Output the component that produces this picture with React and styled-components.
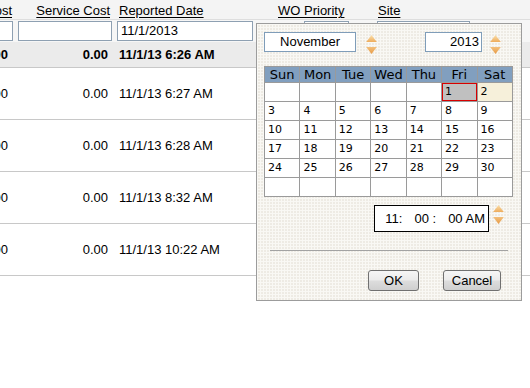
import React from "react";
import styled, { createGlobalStyle } from "styled-components";

const GlobalStyle = createGlobalStyle`
  html, body {
    margin: 0;
    padding: 0;
    background: #fff;
  }
  body {
    font-family: "Liberation Sans", Arial, sans-serif;
    overflow: hidden;
  }
`;

const Page = styled.div`
  position: relative;
  width: 530px;
  height: 388px;
  overflow: hidden;
  background: #fff;
  color: #000;
`;

const Grid = styled.div`
  display: flex;
  flex-direction: column;
  width: 530px;
`;

const HeaderRow = styled.div`
  display: flex;
  height: 20px;
  box-sizing: border-box;
  background: #f4f4f4;
  border-bottom: 1px solid #dedede;
`;

const FilterRow = styled.div`
  display: flex;
  height: 22px;
  box-sizing: border-box;
  background: #f6f6f6;
  padding-top: 1px;
`;

const DataRow = styled.div`
  display: flex;
  height: ${(p) => (p.$first ? 26 : 52)}px;
  box-sizing: border-box;
  background: ${(p) => (p.$first ? "#ebebeb" : "#fff")};
  border-bottom: 1px solid #c8c8c8;
  font-weight: ${(p) => (p.$first ? "bold" : "normal")};
`;

const Cell = styled.div`
  flex: 0 0 ${(p) => p.$w}px;
  display: flex;
  align-items: ${(p) => (p.$top ? "flex-start" : "center")};
  justify-content: ${(p) => (p.$right ? "flex-end" : "flex-start")};
  padding: 0 ${(p) => p.$pr || 0}px 0 ${(p) => p.$pl || 0}px;
  box-sizing: border-box;
  overflow: hidden;
  white-space: nowrap;
  font-size: 13px;
`;

const HeadLabel = styled.span`
  padding-top: 3px;
  line-height: 15px;
  text-decoration: underline;
  text-underline-offset: 2px;
`;

const FilterBox = styled.div`
  flex: 0 0 ${(p) => p.$w}px;
  height: 20px;
  box-sizing: border-box;
  margin-left: ${(p) => p.$ml || 0}px;
  margin-right: ${(p) => p.$mr || 0}px;
  border: 1px solid #8ea0b2;
  background: #fff;
  font-size: 13px;
  line-height: 18px;
  padding-left: 3px;
`;

/* popup */

const Popup = styled.div`
  position: absolute;
  left: 256px;
  top: 23px;
  width: 266px;
  box-sizing: border-box;
  border: 1px solid #9c9c9c;
  background-color: #eeebe4;
  background-image: linear-gradient(90deg, #f9f8f4 1px, transparent 1px),
    linear-gradient(#f9f8f4 1px, transparent 1px);
  background-size: 3px 3px;
  padding: 8px 7px 9px 7px;
`;

const TopBar = styled.div`
  display: flex;
  height: 20px;
  padding-right: 13px;
`;

const SpinGroup = styled.div`
  display: flex;
  align-items: flex-start;
  margin-left: ${(p) => (p.$auto ? "auto" : "0")};
`;

const ValueBox = styled.div`
  width: ${(p) => p.$w}px;
  height: 20px;
  box-sizing: border-box;
  border: 1px solid #7f9db9;
  background: #fff;
  font-size: 13px;
  line-height: 18px;
  text-align: ${(p) => p.$align || "center"};
  padding-right: ${(p) => (p.$align === "right" ? 2 : 0)}px;
`;

const Spin = styled.svg`
  display: block;
  flex: 0 0 auto;
  margin-left: ${(p) => p.$ml}px;
  margin-top: ${(p) => p.$mt}px;
`;

const CalTable = styled.table`
  width: 249px;
  margin-top: 14px;
  border-collapse: collapse;
  table-layout: fixed;
  background: #fff;
  font-family: "DejaVu Sans", Verdana, sans-serif;
`;

const DayHead = styled.th`
  height: 15px;
  padding: 0;
  background: #819fbf;
  border: 1px solid #9a9a9a;
  font-size: 13px;
  font-weight: normal;
  line-height: 15px;
  color: #000;
`;

const DayCell = styled.td`
  height: 18px;
  padding: 0 0 0 3px;
  border: 1px solid #9a9a9a;
  font-size: 11px;
  line-height: 18px;
  background: ${(p) => (p.$selected ? "#c0c0c0" : p.$weekendHi ? "#f6f0da" : "#fff")};
  box-shadow: ${(p) => (p.$selected ? "inset 0 0 0 1px #d80000" : "none")};
`;

const TimeRow = styled.div`
  display: flex;
  justify-content: flex-end;
  align-items: flex-start;
  margin-top: 8px;
  padding-right: 10px;
`;

const TimeBox = styled.div`
  width: 115px;
  height: 27px;
  box-sizing: border-box;
  border: 1px solid #000;
  background: #fff;
  display: flex;
  align-items: center;
  justify-content: flex-end;
  gap: 12px;
  padding-right: 3px;
  font-size: 13px;
`;

const Separator = styled.div`
  margin: 18px 6px 0;
  border-top: 1px solid #a3a3a3;
`;

const ButtonRow = styled.div`
  display: flex;
  justify-content: flex-end;
  gap: 24px;
  margin-top: 19px;
  padding-right: 13px;
`;

const Button = styled.button`
  width: ${(p) => p.$w}px;
  height: 21px;
  box-sizing: border-box;
  padding: 0;
  border: 1px solid #707070;
  border-radius: 3px;
  background: linear-gradient(#f6f6f6 0%, #ebebeb 48%, #dddddd 52%, #cfcfcf 100%);
  font-family: "Liberation Sans", Arial, sans-serif;
  font-size: 13px;
  color: #000;
`;

const columns = [
  { w: 15, label: "Cost", right: true, hpr: 3, vpr: 7 },
  { w: 99, label: "Service Cost", right: true, hpr: 4, vpr: 6 },
  { w: 141, label: "Reported Date", pl: 5 },
  { w: 113, label: "WO Priority", pl: 23 },
  { w: 120, label: "Site", pl: 10 },
];

const rows = [
  { cost: "0.00", service: "0.00", date: "11/1/13 6:26 AM" },
  { cost: "0.00", service: "0.00", date: "11/1/13 6:27 AM" },
  { cost: "0.00", service: "0.00", date: "11/1/13 6:28 AM" },
  { cost: "0.00", service: "0.00", date: "11/1/13 8:32 AM" },
  { cost: "0.00", service: "0.00", date: "11/1/13 10:22 AM" },
];

const weekDays = ["Sun", "Mon", "Tue", "Wed", "Thu", "Fri", "Sat"];

// November 2013 starts on a Friday
const buildWeeks = () => {
  const cells = [];
  for (let i = 0; i < 5; i++) cells.push(null);
  for (let d = 1; d <= 30; d++) cells.push(d);
  while (cells.length < 42) cells.push(null);
  const weeks = [];
  for (let i = 0; i < 42; i += 7) weeks.push(cells.slice(i, i + 7));
  return weeks;
};

const Spinner = ({ ml, mt }) => (
  <Spin $ml={ml} $mt={mt} width="11" height="21" viewBox="0 0 11 21">
    <defs>
      <linearGradient id="spinUp" x1="0" y1="0" x2="0" y2="1">
        <stop offset="0" stopColor="#fbe0ac" />
        <stop offset="1" stopColor="#eeac5c" />
      </linearGradient>
      <linearGradient id="spinDown" x1="0" y1="0" x2="0" y2="1">
        <stop offset="0" stopColor="#f3c07c" />
        <stop offset="1" stopColor="#e79a45" />
      </linearGradient>
    </defs>
    <polygon points="5.5,1 10.8,8 0.2,8" fill="url(#spinUp)" />
    <polygon points="0.2,13 10.8,13 5.5,20" fill="url(#spinDown)" />
  </Spin>
);

const DatePopup = () => {
  const weeks = buildWeeks();
  return (
    <Popup>
      <TopBar>
        <SpinGroup>
          <ValueBox $w={92}>November</ValueBox>
          <Spinner ml={10} mt={2} />
        </SpinGroup>
        <SpinGroup $auto>
          <ValueBox $w={57} $align="right">
            2013
          </ValueBox>
          <Spinner ml={8} mt={2} />
        </SpinGroup>
      </TopBar>
      <CalTable>
        <thead>
          <tr>
            {weekDays.map((d) => (
              <DayHead key={d}>{d}</DayHead>
            ))}
          </tr>
        </thead>
        <tbody>
          {weeks.map((week, wi) => (
            <tr key={wi}>
              {week.map((day, di) => (
                <DayCell key={di} $selected={day === 1} $weekendHi={day === 2}>
                  {day || ""}
                </DayCell>
              ))}
            </tr>
          ))}
        </tbody>
      </CalTable>
      <TimeRow>
        <TimeBox>
          <span>11:</span>
          <span>00 :</span>
          <span>00 AM</span>
        </TimeBox>
        <Spinner ml={4} mt={-1} />
      </TimeRow>
      <Separator />
      <ButtonRow>
        <Button $w={51}>OK</Button>
        <Button $w={58}>Cancel</Button>
      </ButtonRow>
    </Popup>
  );
};

const App = () => {
  return (
    <Page>
      <GlobalStyle />
      <Grid>
        <HeaderRow>
          {columns.map((c) => (
            <Cell
              key={c.label}
              $w={c.w}
              $top
              $right={c.right}
              $pr={c.hpr}
              $pl={c.pl}
            >
              <HeadLabel>{c.label}</HeadLabel>
            </Cell>
          ))}
        </HeaderRow>
        <FilterRow>
          <Cell $w={15} $top $right $pr={2}>
            <FilterBox $w={40} />
          </Cell>
          <Cell $w={99} $top>
            <FilterBox $w={94} $ml={3} />
          </Cell>
          <Cell $w={141} $top>
            <FilterBox $w={136} $ml={3}>
              11/1/2013
            </FilterBox>
          </Cell>
          <Cell $w={113} $top>
            <FilterBox $w={45} $ml={49} />
          </Cell>
          <Cell $w={120} $top>
            <FilterBox $w={93} $ml={9} />
          </Cell>
        </FilterRow>
        {rows.map((r, i) => (
          <DataRow key={i} $first={i === 0}>
            <Cell $w={15} $right $pr={7}>
              {r.cost}
            </Cell>
            <Cell $w={99} $right $pr={6}>
              {r.service}
            </Cell>
            <Cell $w={141} $pl={5}>
              {r.date}
            </Cell>
          </DataRow>
        ))}
      </Grid>
      <DatePopup />
    </Page>
  );
};

export default App;
